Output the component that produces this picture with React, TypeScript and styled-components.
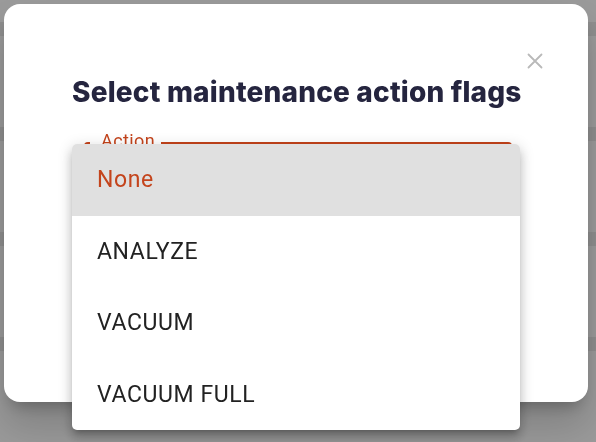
import React from 'react'
import styled, { createGlobalStyle } from 'styled-components'

const GlobalStyle = createGlobalStyle`
  html, body {
    margin: 0;
    padding: 0;
    width: 596px;
    height: 442px;
    overflow: hidden;
  }
  body {
    font-family: Inter, 'Liberation Sans', sans-serif;
    background: #9b9b9b;
  }
`

const options = ['None', 'ANALYZE', 'VACUUM', 'VACUUM FULL']

const App = () => {
  return (
    <>
      <GlobalStyle />
      <Page>
        {[0, 1, 2, 3].map((i) => (
          <PageRow key={i} />
        ))}
      </Page>

      <Overlay>
        <Dialog>
          <CloseButton aria-label='close'>
            <svg width='16' height='16' viewBox='0 0 16 16'>
              <path d='M1.5 1.5 L14.5 14.5 M14.5 1.5 L1.5 14.5' stroke='#b9b9b9' strokeWidth='1.8' strokeLinecap='round' />
            </svg>
          </CloseButton>
          <Title>Select maintenance action flags</Title>
          <Field>
            <FieldLabel>Action</FieldLabel>
          </Field>
        </Dialog>

        <Menu>
          {options.map((o, i) => (
            <MenuItem key={o} selected={i === 0}>
              {o}
            </MenuItem>
          ))}
        </Menu>
      </Overlay>
    </>
  )
}

export default App

const Page = styled.div`
  display: flex;
  flex-direction: column;
  gap: 91px;
  padding-top: 22px;
`

const PageRow = styled.div`
  height: 14px;
  background: #8f8f8f;
`

const Overlay = styled.div`
  position: fixed;
  inset: 0;
  padding: 4px 8px 0 4px;
`

const Dialog = styled.div`
  display: flex;
  flex-direction: column;
  height: 398px;
  background: #ffffff;
  border-radius: 16px;
  box-shadow: 0 11px 15px -7px rgba(0, 0, 0, 0.25), 0 24px 38px 3px rgba(0, 0, 0, 0.16);
  padding: 49px 45px 0 68px;
  box-sizing: border-box;
`

const CloseButton = styled.button`
  align-self: flex-end;
  width: 16px;
  height: 16px;
  padding: 0;
  border: none;
  background: transparent;
  display: flex;
`

const Title = styled.h2`
  margin: 3px 0 0 0;
  font-size: 28px;
  line-height: 40px;
  font-weight: 800;
  color: #25253f;
  letter-spacing: 0.2px;
  white-space: nowrap;
`

const Field = styled.div`
  position: relative;
  margin: 30px 31px 0 12px;
  height: 56px;
  border: 2px solid #c4441c;
  border-radius: 4px;
`

const FieldLabel = styled.span`
  position: absolute;
  top: -13px;
  left: 4px;
  padding: 0 6px 0 11px;
  background: #ffffff;
  font-family: Roboto, sans-serif;
  font-size: 18px;
  line-height: 20px;
  letter-spacing: 0.4px;
  color: #c4441c;
`

const Menu = styled.ul`
  position: absolute;
  top: 144px;
  left: 72px;
  width: 448px;
  margin: 0;
  padding: 0;
  list-style: none;
  background: #ffffff;
  border-radius: 5px;
  overflow: hidden;
  box-shadow: 0 5px 5px -3px rgba(0, 0, 0, 0.2), 0 8px 10px 1px rgba(0, 0, 0, 0.14), 0 3px 14px 2px rgba(0, 0, 0, 0.12);
`

const MenuItem = styled.li<{ selected?: boolean }>`
  height: 71.5px;
  display: flex;
  align-items: center;
  padding-left: 25px;
  font-family: Roboto, sans-serif;
  font-size: 23px;
  letter-spacing: 0.6px;
  color: ${(p) => (p.selected ? '#c4441c' : '#222222')};
  background: ${(p) => (p.selected ? '#e0e0e0' : 'transparent')};
`
